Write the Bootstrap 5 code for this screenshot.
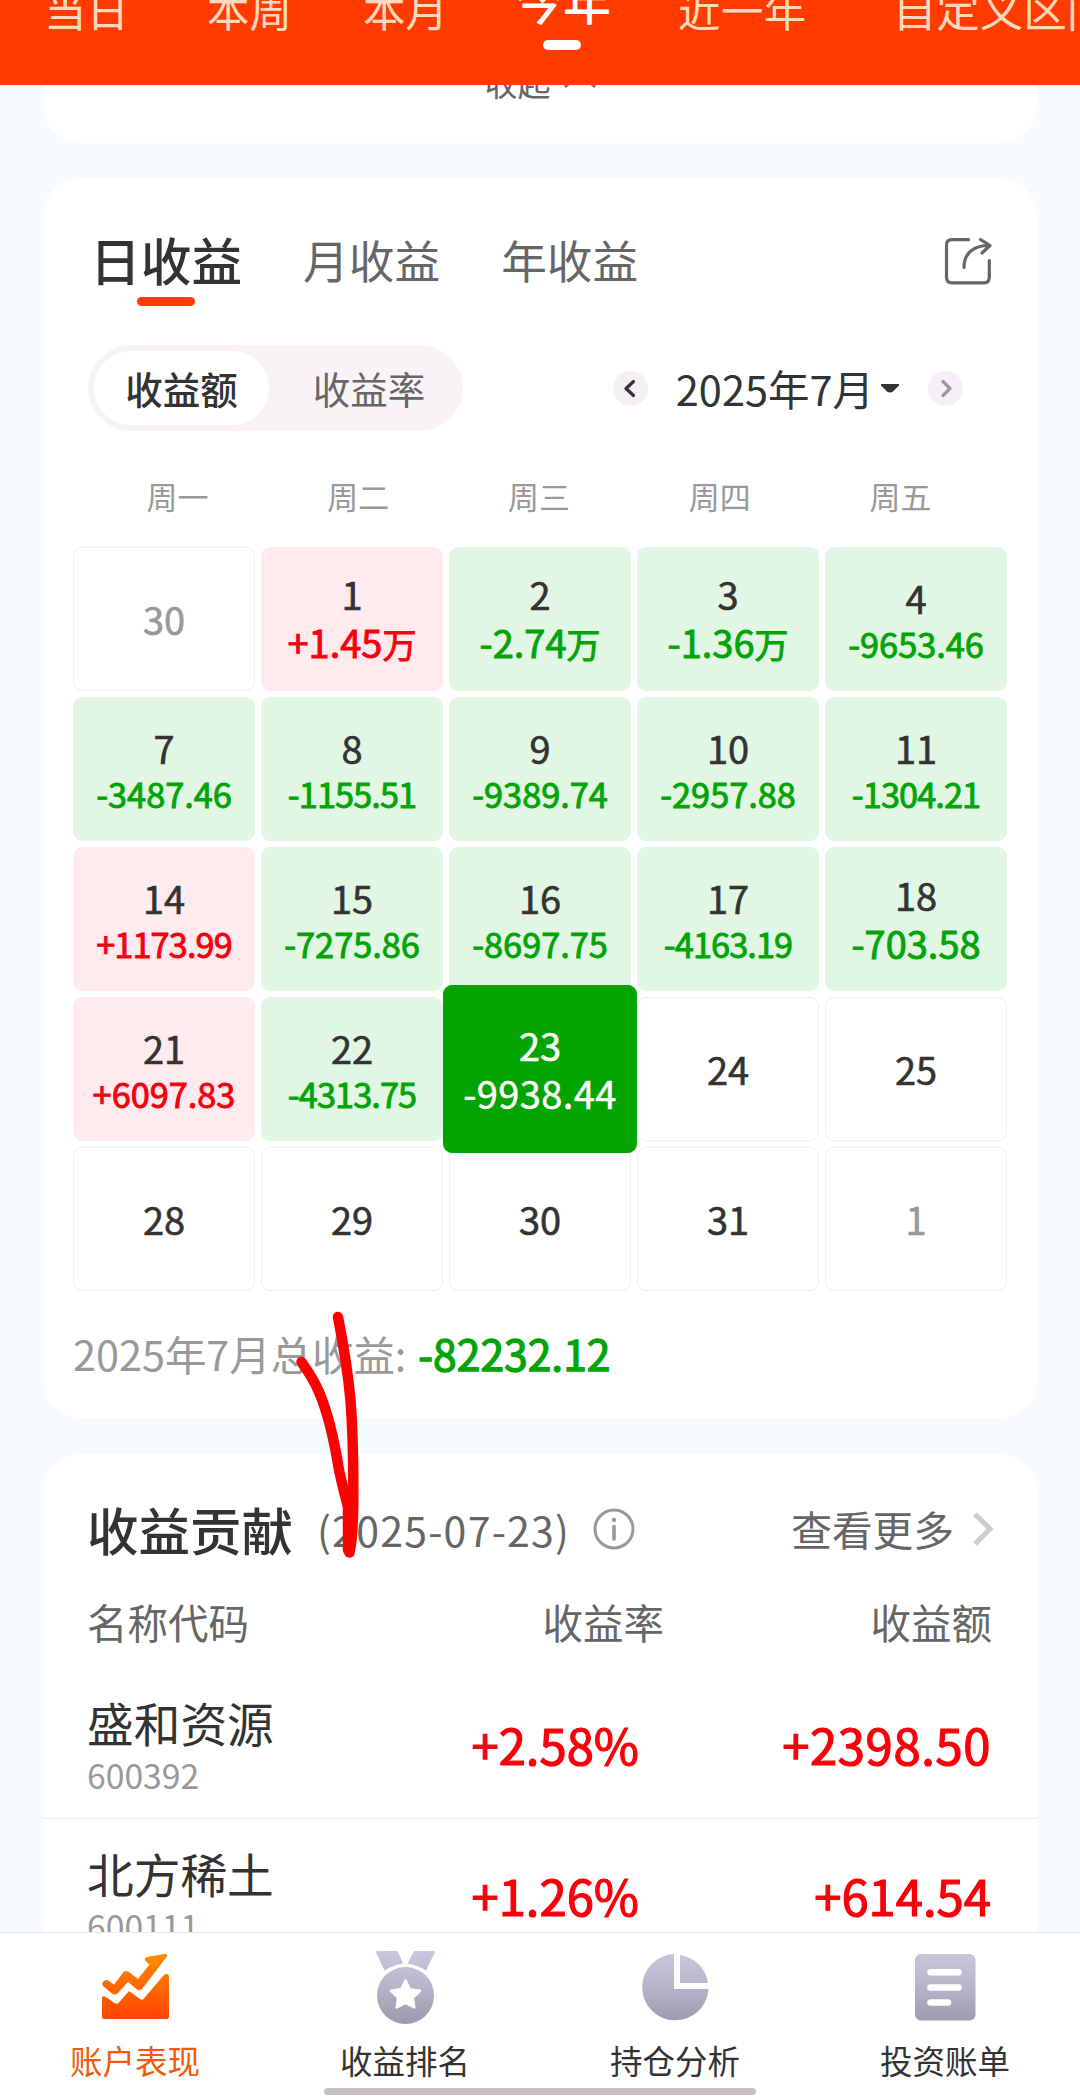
<!DOCTYPE html>
<html lang="zh-CN">
<head>
<meta charset="utf-8">
<meta name="viewport" content="width=device-width, initial-scale=1">
<title>账户表现</title>
<link href="https://cdn.jsdelivr.net/npm/bootstrap@5.3.0/dist/css/bootstrap.min.css" rel="stylesheet">
<style>
  body { margin: 0; background: #f6fbff; color: #333; font-family: "Noto Sans CJK SC", "Noto Sans", sans-serif; }
  .screen { width: 1080px; height: 2098px; }
  .period-bar { height: 85px; background: #ff3b00; color: #ffd9bd; font-size: 42.5px; line-height: 44px; flex: none; }
  .period-bar ul { margin: -13px 0 0; width: 1200px; }
  .period-bar li { position: relative; flex: none; }
  .p1 { margin-left: 44px; } .p2 { margin-left: 78px; } .p3 { margin-left: 71px; }
  .p4 { margin: -10px 0 0 67px; font-size: 48px; font-weight: 500; color: #fff; }
  .p5 { margin-left: 67px; letter-spacing: .4px; } .p6 { margin-left: 86px; font-size: 43.5px; }
  .p4::after { content: ""; position: absolute; left: 28px; top: 63px; width: 38px; height: 10px; border-radius: 5px; background: #fff; }
  .panel { width: 994px; margin: 0 auto; background: #fff; border-radius: 38px; flex: none; }
  .panel-fold { height: 58px; border-radius: 0 0 38px 38px; margin-bottom: 35px; }
  .fold-btn { font-size: 33px; line-height: 34px; color: #666; margin-top: -20px; }
  .fold-btn svg { margin: -3px 0 0 13px; }
  .main-tabs { padding: 49px 44px 0 47px; }
  .main-tabs .tab { position: relative; line-height: 64px; font-size: 45.7px; color: #666; margin-right: 61px; }
  .main-tabs .tab.on { font-size: 50.7px; font-weight: 500; color: #333; }
  .main-tabs .tab.on::after { content: ""; position: absolute; left: 47px; top: 70px; width: 58px; height: 9px; border-radius: 4.5px; background: #ff3b00; }
  .switch-row { margin-top: 54px; padding: 0 74px 0 45px; height: 86px; }
  .seg { width: 375px; height: 86px; padding: 6px; border-radius: 43px; background: #f7f3f7; font-size: 37.5px; color: #666; line-height: 74px; }
  .seg span { border-radius: 37px; text-align: center; flex: none; }
  .seg .on { width: 175px; background: #fff; color: #333; font-weight: 500; }
  .seg .off { width: 200px; }
  .round-btn { width: 35px; height: 35px; border-radius: 50%; background: #f5f0f5; }
  .month { font-size: 41.5px; line-height: 60px; margin: 0 7px 0 28px; }
  .next { margin-left: 29px; }
  .weekdays { margin-top: 42px; padding: 0 46px 0 44px; line-height: 45px; font-size: 31px; color: #999; text-align: center; }
  .days { display: grid; grid-template-columns: repeat(5, 1fr); grid-auto-rows: 144px; gap: 6px; margin-top: 29px; padding: 0 30px; }
  .day { border-radius: 9px; border: 1px solid #efefef; display: flex; flex-direction: column; justify-content: center; align-items: center; font-size: 38px; line-height: 48px; -webkit-text-stroke: .6px; }
  .day b { font-weight: 400; }
  .day i { font-style: normal; font-size: 34.3px; line-height: 43px; -webkit-text-stroke: .9px; }
  .day i.big { font-size: 38px; line-height: 48px; }
  .day i.narrow { letter-spacing: -.9px; }
  .day small { font-size: 34px; }
  .day.up { background: #ffeaee; border-color: #ffeaee; } .up i { color: #f5000e; }
  .day.down { background: #e1f6e3; border-color: #e1f6e3; } .down i { color: #02a406; }
  .day.other { color: #999; }
  .day.picked { background: #02a400; border-color: #02a400; color: #fff; margin: -12px -6px; z-index: 1; }
  .day.picked i { letter-spacing: .4px; -webkit-text-stroke: .5px; }
  .total { margin: 32px 0 0 30px; height: 95px; line-height: 60px; font-size: 41.4px; color: #999; }
  .total strong { font-size: 42.6px; font-weight: 400; -webkit-text-stroke: 1.3px; color: #02a406; margin-left: 12px; }
  .panel-last { margin-top: 36px; height: 620px; padding-top: 45px; }
  .contrib { height: 60px; line-height: 60px; padding: 0 42px 0 44px; }
  .contrib h2 { font-size: 51.5px; line-height: 60px; font-weight: 500; margin: 0; }
  .contrib .date { font-size: 41px; letter-spacing: 1.25px; color: #666; margin: 0 23px 0 24px; }
  .contrib .more { font-size: 40.7px; color: #666; margin-right: 17px; }
  .grid3 { display: grid; grid-template-columns: 300px 1fr 352px; padding: 0 45px 0 44px; align-items: center; }
  .grid3 > :not(:first-child) { text-align: right; }
  .thead-line { margin-top: 38px; margin-bottom: 21px; line-height: 50px; font-size: 40.5px; color: #666; }
  .thead-line > :nth-child(2) { margin-right: -24px; }
  .stock { height: 151px; border-bottom: 1px solid #ececec; }
  .stock .nm { font-size: 46.7px; line-height: 60px; padding-top: 3px; }
  .stock .code { font-size: 33.7px; line-height: 46px; color: #999; }
  .stock .num { font-size: 49px; -webkit-text-stroke: 1.2px; color: #f9000a; padding: 2px 1px 0 0; }
  .stock .amt { letter-spacing: .6px; }
  .bottom-nav { height: 166px; background: #fff; border-top: 1px solid #ebebeb; flex: none; position: relative; }
  .bottom-nav a { width: 270px; padding-top: 15px; text-decoration: none; color: #333; font-size: 32.5px; line-height: 40px; }
  .bottom-nav a.on { color: #f25a08; }
  .bottom-nav svg { margin-bottom: 12px; }
  .home-bar { position: absolute; left: 324px; bottom: 3px; width: 432px; height: 7px; border-radius: 4px; background: #c6c1c5; }
  .pen { left: 0; top: 0; z-index: 5; pointer-events: none; }
</style>
</head>
<body>
<div class="screen d-flex flex-column position-relative overflow-hidden">
  <header class="period-bar overflow-hidden">
    <ul class="list-unstyled d-flex">
      <li class="p1">当日</li><li class="p2">本周</li><li class="p3">本月</li><li class="p4">今年</li><li class="p5">近一年</li><li class="p6">自定义区间</li>
    </ul>
  </header>

  <main class="flex-grow-1 overflow-hidden d-flex flex-column">
    <section class="panel panel-fold overflow-hidden">
      <div class="fold-btn d-flex justify-content-center">收起<svg width="32" height="34" fill="none" stroke="#777" stroke-width="3"><path d="M1 25 16 10 31 25"/></svg></div>
    </section>

    <section class="panel">
      <div class="main-tabs d-flex align-items-center">
        <span class="tab on">日收益</span><span class="tab">月收益</span><span class="tab">年收益</span>
        <svg class="ms-auto mt-1" width="50" height="50" viewBox="944 235 50 50" fill="none" stroke="#666" stroke-width="3.2" stroke-linecap="round" stroke-linejoin="round"><path d="M969.500 238.700H953q-5.500 0-5.500 5.500V276q0 5.800 5.500 5.800H985q5.300 0 5.300-5.800V259.500M965 266.500C965 252 975 244.500 989.500 244.500M981.500 238.500 991 244.500 983 252"/></svg>
      </div>

      <div class="switch-row d-flex align-items-center justify-content-between">
        <div class="seg d-flex"><span class="on">收益额</span><span class="off">收益率</span></div>
        <div class="d-flex align-items-center">
          <span class="round-btn d-flex"><svg width="35" height="35" fill="none" stroke="#333" stroke-width="3.200" stroke-linecap="round" stroke-linejoin="round"><path d="M20.500 10.500 13 17.500 20.500 24.500"/></svg></span>
          <span class="month">2025年7月</span>
          <svg width="18" height="9" fill="#333"><path d="M0 0H18V1.500L12 7.500Q9 9.500 6 7.500L0 1.500Z"/></svg>
          <span class="round-btn next d-flex"><svg width="35" height="35" fill="none" stroke="#999" stroke-width="3.200" stroke-linecap="round" stroke-linejoin="round"><path d="M15 10.500 22 17.500 15 24.500"/></svg></span>
        </div>
      </div>

      <div class="weekdays d-flex">
        <span class="col">周一</span><span class="col">周二</span><span class="col">周三</span><span class="col">周四</span><span class="col">周五</span>
      </div>

      <div class="days">
        <div class="day other">30</div>
        <div class="day up"><b>1</b><i class="big">+1.45<small>万</small></i></div>
        <div class="day down"><b>2</b><i class="big">-2.74<small>万</small></i></div>
        <div class="day down"><b>3</b><i class="big">-1.36<small>万</small></i></div>
        <div class="day down"><b>4</b><i>-9653.46</i></div>

        <div class="day down"><b>7</b><i>-3487.46</i></div>
        <div class="day down"><b>8</b><i class="narrow">-1155.51</i></div>
        <div class="day down"><b>9</b><i>-9389.74</i></div>
        <div class="day down"><b>10</b><i>-2957.88</i></div>
        <div class="day down"><b>11</b><i class="narrow">-1304.21</i></div>

        <div class="day up"><b>14</b><i class="narrow">+1173.99</i></div>
        <div class="day down"><b>15</b><i>-7275.86</i></div>
        <div class="day down"><b>16</b><i>-8697.75</i></div>
        <div class="day down"><b>17</b><i class="narrow">-4163.19</i></div>
        <div class="day down"><b>18</b><i class="big">-703.58</i></div>

        <div class="day up"><b>21</b><i>+6097.83</i></div>
        <div class="day down"><b>22</b><i class="narrow">-4313.75</i></div>
        <div class="day picked"><b>23</b><i class="big">-9938.44</i></div>
        <div class="day">24</div>
        <div class="day">25</div>

        <div class="day">28</div>
        <div class="day">29</div>
        <div class="day">30</div>
        <div class="day">31</div>
        <div class="day other">1</div>
      </div>

      <div class="total">2025年7月总收益:<strong>-82232.12</strong></div>
    </section>

    <section class="panel panel-last">
      <div class="contrib d-flex align-items-center">
        <h2>收益贡献</h2><span class="date">(2025-07-23)</span>
        <svg width="42" height="42" fill="none" stroke="#999" stroke-width="3"><circle cx="21" cy="21" r="19"/><path d="M21 18.500V31" stroke-width="3.600" stroke-linecap="round"/><circle cx="21" cy="12" r="2.200" fill="#999" stroke="none"/></svg>
        <span class="more ms-auto">查看更多</span>
        <svg width="24" height="38" fill="none" stroke="#ccc" stroke-width="5"><path d="M4 4 19 19 4 34"/></svg>
      </div>
      <div class="grid3 thead-line"><span>名称代码</span><span>收益率</span><span>收益额</span></div>
      <div class="grid3 stock">
        <div><div class="nm">盛和资源</div><div class="code">600392</div></div>
        <span class="num">+2.58%</span><span class="num amt">+2398.50</span>
      </div>
      <div class="grid3 stock">
        <div><div class="nm">北方稀土</div><div class="code">600111</div></div>
        <span class="num">+1.26%</span><span class="num">+614.54</span>
      </div>
    </section>
  </main>

  <nav class="bottom-nav d-flex">
    <a class="on d-flex flex-column align-items-center">
      <svg width="80" height="80" viewBox="95 1948 80 80"><defs><linearGradient id="hot" gradientUnits="userSpaceOnUse" x1="0" y1="1954" x2="0" y2="2019"><stop offset="0" stop-color="#ff8e00"/><stop offset="1" stop-color="#ff4200"/></linearGradient></defs>
        <path fill="url(#hot)" d="M103 1986Q101 1983 104 1981 107 1979 109 1981L114 1984.500 123.500 1972Q126 1970 129 1972L138 1979 149.500 1964.500 145.500 1961Q143.500 1958 147 1957L164.500 1954Q168 1953.500 167 1956.500L142 1989Q140 1991 137 1989.500L128 1982 118 1993Q115 1996 111.500 1993Z"/>
        <path fill="url(#hot)" d="M102 1998Q102 1995.500 105 1996.500L114.500 2003Q116.500 2004.500 118.500 2003L129 1991 140 1999Q142 2000.500 143.500 1999L163.500 1975.500Q165 1973.500 167 1974 169 1974.500 169 1977V2016.500Q169 2019 166.500 2019H104.500Q102 2019 102 2016.500Z"/></svg>
      账户表现</a>
    <a class="d-flex flex-column align-items-center">
      <svg width="80" height="80" viewBox="366 1948 80 80"><defs><linearGradient id="cool" gradientUnits="userSpaceOnUse" x1="0" y1="1952" x2="0" y2="2024"><stop offset="0" stop-color="#c8c6dc"/><stop offset=".45" stop-color="#b9b5cd"/><stop offset="1" stop-color="#9b99ad"/></linearGradient></defs>
        <g fill="url(#cool)"><path d="M378.500 1951H397Q398.500 1951 399.200 1952.300L404 1963.500Q394 1965 385.500 1970.500L377.200 1953Q376.500 1951 378.500 1951ZM434.500 1951H416.500Q415 1951 414.300 1952.300L408.500 1963.500Q418.500 1965 427 1970.500L435.500 1953Q436.500 1951 434.500 1951Z"/><circle cx="406.500" cy="1995.500" r="28.500"/></g>
        <path fill="#fff" stroke="#fff" stroke-width="2.500" stroke-linejoin="round" d="M406.500 1980.500 410.900 1989.200 421 1990.800 413.800 1997.800 415.300 2007.500 406.500 2003 397.700 2007.500 399.200 1997.800 392 1990.800 402.100 1989.200Z"/></svg>
      收益排名</a>
    <a class="d-flex flex-column align-items-center">
      <svg width="80" height="80" viewBox="635 1948 80 80" fill="url(#cool)"><path d="M674 1954V1989H708.500A33.200 33.200 0 1 1 674 1954ZM680 1955V1983H708A33.200 33.200 0 0 0 680 1955Z"/></svg>
      持仓分析</a>
    <a class="d-flex flex-column align-items-center">
      <svg width="80" height="80" viewBox="905 1948 80 80"><rect x="915" y="1954" width="60.500" height="66.500" rx="6" fill="url(#cool)"/><path d="M930.500 1972.300H958.500M930.500 1987.500H958.500M930.500 2002.500H948" stroke="#fff" stroke-width="6.600" stroke-linecap="round"/></svg>
      投资账单</a>
    <div class="home-bar"></div>
  </nav>

  <svg class="pen position-absolute" width="1080" height="2098" fill="none" stroke="#f00" stroke-width="10.500" stroke-linecap="round" stroke-linejoin="round"><path d="M338 1317Q347 1363 350.500 1400 353.500 1440 353.300 1490 353.500 1535 349.500 1552.500L349 1510Q344 1493 339 1470 331 1420 319 1392 313 1378 301.500 1362"/><path d="M348 1500V1550"/></svg>
</div>
<script src="https://cdn.jsdelivr.net/npm/bootstrap@5.3.0/dist/js/bootstrap.bundle.min.js"></script>
</body>
</html>
